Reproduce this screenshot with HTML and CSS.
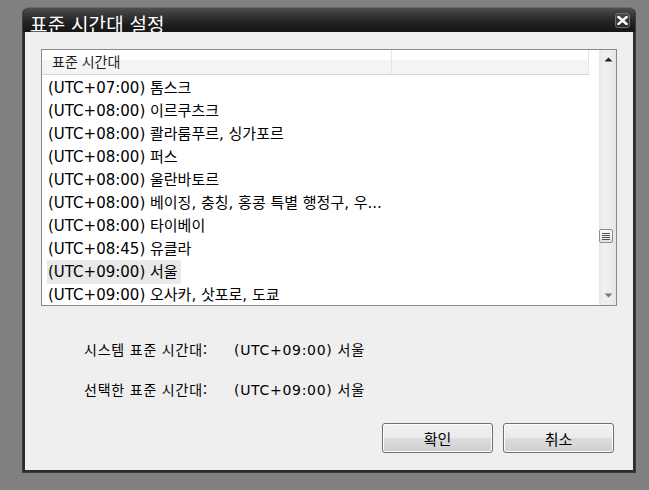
FILE: index.html
```html
<!DOCTYPE html>
<html lang="ko">
<head>
<meta charset="utf-8">
<link rel="stylesheet" href="styles.css">
</head>
<body>
<div class="window">
  <div class="titlebar">
    <span class="title">표준 시간대 설정</span>
    <span class="close"><svg width="11" height="9" viewBox="0 0 11 9"><path d="M1.5 1 L9.5 8 M9.5 1 L1.5 8" stroke="#fff" stroke-width="2.4" stroke-linecap="square"/></svg></span>
  </div>
  <div class="content">
    <div class="listbox">
      <div class="listmain">
        <div class="header">
          <div class="hcol1">표준 시간대</div>
          <div class="hcol2"></div>
        </div>
        <div class="rows">
          <div class="row"><span>(UTC+07:00) 톰스크</span></div>
          <div class="row"><span>(UTC+08:00) 이르쿠츠크</span></div>
          <div class="row"><span>(UTC+08:00) 콸라룸푸르, 싱가포르</span></div>
          <div class="row"><span>(UTC+08:00) 퍼스</span></div>
          <div class="row"><span>(UTC+08:00) 울란바토르</span></div>
          <div class="row"><span>(UTC+08:00) 베이징, 충칭, 홍콩 특별 행정구, 우...</span></div>
          <div class="row"><span>(UTC+08:00) 타이베이</span></div>
          <div class="row"><span>(UTC+08:45) 유클라</span></div>
          <div class="row"><span class="sel">(UTC+09:00) 서울</span></div>
          <div class="row"><span>(UTC+09:00) 오사카, 삿포로, 도쿄</span></div>
        </div>
      </div>
      <div class="scrollbar">
        <svg class="arrow" width="9" height="5" viewBox="0 0 9 5"><path d="M0.5 4.5 L4.5 0.5 L8.5 4.5 Z" fill="#222"/></svg>
        <div class="track">
          <div class="thumb">
            <svg width="10" height="9" viewBox="0 0 10 9"><path d="M1 1.5 H9 M1 3.5 H9 M1 5.5 H9 M1 7.5 H9" stroke="#555" stroke-width="1"/></svg>
          </div>
        </div>
        <svg class="arrow" width="9" height="5" viewBox="0 0 9 5"><path d="M0.5 0.5 L8.5 0.5 L4.5 4.5 Z" fill="#777"/></svg>
      </div>
    </div>
    <div class="info">
      <div class="inforow"><span class="label">시스템 표준 시간대:</span><span class="value">(UTC+09:00) 서울</span></div>
      <div class="inforow"><span class="label">선택한 표준 시간대:</span><span class="value">(UTC+09:00) 서울</span></div>
    </div>
    <div class="buttons">
      <button class="btn">확인</button>
      <button class="btn">취소</button>
    </div>
  </div>
</div>
</body>
</html>
```
FILE: styles.css
```css
html, body {
  margin: 0;
  padding: 0;
}
body {
  background: #808080;
  width: 649px;
  height: 490px;
  overflow: hidden;
  font-family: "Noto Sans", "Noto Sans CJK KR", sans-serif;
}
.window {
  margin: 7px 0 0 22px;
  width: 614px;
  height: 466px;
  box-sizing: border-box;
  border: 1px solid #3c3c3c;
  border-top-color: #6a6a6a;
  border-radius: 7px 7px 0 0;
  background: #2c2c2c;
  padding: 0 2px 2px 2px;
  display: flex;
  flex-direction: column;
}
.titlebar {
  height: 24px;
  margin: 0 -2px;
  padding: 0 5px 0 7px;
  border-radius: 6px 6px 0 0;
  background: linear-gradient(#4e4e4e 0%, #333 35%, #1e1e1e 70%, #161616 100%);
  display: flex;
  align-items: center;
  justify-content: space-between;
}
.title {
  color: #fff;
  font-family: "Noto Sans CJK KR", sans-serif;
  font-size: 19px;
  line-height: 20px;
  margin-top: 7px;
  letter-spacing: 0.2px;
}
.close {
  width: 13px;
  height: 13px;
  margin-top: 1px;
  border: 1px solid #6e6e6e;
  border-radius: 3px;
  background: linear-gradient(#4a4a4a, #2a2a2a);
  display: flex;
  align-items: center;
  justify-content: center;
}
.content {
  flex: 1;
  background: #efefef;
  padding: 17px 16px 0 16px;
  display: flex;
  flex-direction: column;
}
.listbox {
  height: 257px;
  box-sizing: border-box;
  border: 1px solid #868b93;
  background: #fff;
  display: flex;
  overflow: hidden;
}
.listmain {
  flex: 1;
  overflow: hidden;
}
.header {
  display: flex;
  width: 547px;
  height: 24px;
  border-bottom: 1px solid #d5d5d5;
  background: linear-gradient(#fff 0%, #fff 40%, #f3f4f6 41%, #f3f4f6 100%);
  font-family: "Noto Sans CJK KR", sans-serif;
  font-size: 14px;
  color: #1e1e1e;
}
.hcol1 {
  width: 350px;
  box-sizing: border-box;
  padding: 1px 0 0 10px;
  border-right: 1px solid #e3e5e8;
  line-height: 20px;
}
.hcol2 {
  flex: 1;
  border-right: 1px solid #e3e5e8;
}
.rows {
  padding-top: 1px;
}
.row {
  height: 23px;
  display: flex;
  align-items: center;
  padding-left: 5px;
  font-family: "DejaVu Sans", "Noto Sans CJK KR", sans-serif;
  font-size: 15px;
  color: #000;
  white-space: nowrap;
}
.row > span {
  padding: 2px 3px 2px 1px;
  line-height: 20px;
}
.row .sel {
  background: #e9e9e9;
}
.scrollbar {
  width: 17px;
  background: linear-gradient(90deg, #e6e6e6 0%, #f0f0f0 30%, #ededed 70%, #e4e4e4 100%);
  display: flex;
  flex-direction: column;
  align-items: center;
  padding: 7px 0 7px 0;
  box-sizing: border-box;
}
.arrow {
  display: block;
  margin-left: 1px;
}
.track {
  flex: 1;
  width: 100%;
  position: relative;
}
.thumb {
  position: absolute;
  left: 0;
  top: 167px;
  width: 12px;
  height: 12px;
  border: 1px solid #8c8c8c;
  border-radius: 2px;
  background: linear-gradient(#fbfbfb, #e1e1e1);
  display: flex;
  align-items: center;
  justify-content: center;
}
.info {
  margin-top: 33px;
  display: flex;
  flex-direction: column;
  gap: 20px;
  padding-left: 43px;
}
.inforow {
  display: flex;
  height: 20px;
  align-items: center;
  color: #000;
}
.label {
  width: 150px;
  font-family: "Noto Sans CJK KR", sans-serif;
  font-size: 14px;
  letter-spacing: 0.8px;
}
.value {
  font-family: "DejaVu Sans", "Noto Sans CJK KR", sans-serif;
  font-size: 14px;
  letter-spacing: 0.7px;
}
.buttons {
  margin-top: 24px;
  display: flex;
  justify-content: flex-end;
  gap: 10px;
  padding-right: 3px;
}
.btn {
  width: 111px;
  height: 30px;
  box-sizing: border-box;
  border: 1px solid #707070;
  border-radius: 3px;
  background: linear-gradient(#f2f2f2 0%, #ebebeb 48%, #dddddd 52%, #cfcfcf 100%);
  box-shadow: inset 0 0 0 1px #fcfcfc;
  font-family: "Noto Sans CJK KR", sans-serif;
  font-size: 15px;
  color: #000;
  padding: 0;
}
```
